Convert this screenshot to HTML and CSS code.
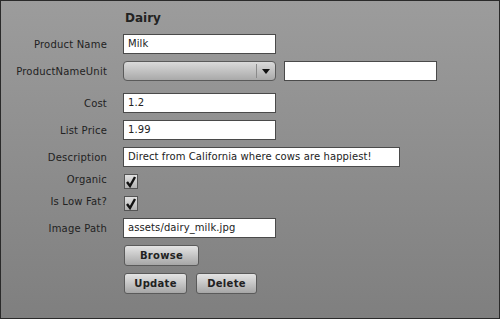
FILE: index.html
```html
<!DOCTYPE html>
<html lang="en">
<head>
    <meta charset="UTF-8">
    <title>Dairy</title>
    <link rel="stylesheet" href="styles.css">
</head>
<body>
    <div class="panel">
        <div class="form">
            <div class="label"></div>
            <h1 class="title">Dairy</h1>

            <label class="label">Product Name</label>
            <div class="field"><div class="text">Milk</div></div>

            <label class="label">ProductNameUnit</label>
            <div class="field">
                <div class="combo"><span class="combo-arrow"></span></div>
                <div class="text unit"></div>
            </div>

            <label class="label gap-top">Cost</label>
            <div class="field gap-top"><div class="text">1.2</div></div>

            <label class="label">List Price</label>
            <div class="field"><div class="text">1.99</div></div>

            <label class="label">Description</label>
            <div class="field"><div class="text wide">Direct from California where cows are happiest!</div></div>

            <label class="label small">Organic</label>
            <div class="field small">
                <span class="check"><svg width="12" height="13" viewBox="0 0 12 13"><path d="M2 7 L5 11 L10 2" fill="none" stroke="#111" stroke-width="2.4"/></svg></span>
            </div>

            <label class="label small">Is Low Fat?</label>
            <div class="field small">
                <span class="check"><svg width="12" height="13" viewBox="0 0 12 13"><path d="M2 7 L5 11 L10 2" fill="none" stroke="#111" stroke-width="2.4"/></svg></span>
            </div>

            <label class="label">Image Path</label>
            <div class="field"><div class="text">assets/dairy_milk.jpg</div></div>

            <div class="label"></div>
            <div class="field"><button class="btn browse">Browse</button></div>

            <div class="label"></div>
            <div class="field">
                <button class="btn update">Update</button>
                <button class="btn delete">Delete</button>
            </div>
        </div>
    </div>
</body>
</html>
```

FILE: styles.css
```css
body {
    margin: 0;
    font-family: 'DejaVu Sans', Verdana, sans-serif;
    font-size: 10px;
    color: #222;
}

.panel {
    width: 500px;
    height: 319px;
    box-sizing: border-box;
    border: 1px solid #2a2a2a;
    background: linear-gradient(#9c9c9c, #7f7f7f);
    padding-top: 8px;
}

.form {
    display: grid;
    grid-template-columns: 106px auto;
    column-gap: 16px;
    row-gap: 7px;
    align-items: center;
}

.title {
    margin: 0;
    padding-left: 2px;
    font-size: 12px;
    font-weight: bold;
    color: #222;
    height: 18px;
    line-height: 18px;
}

.label {
    text-align: right;
    color: #222;
    letter-spacing: 0.2px;
}

.field {
    display: flex;
    align-items: center;
    gap: 8px;
}

.gap-top {
    margin-top: 5px;
}

.text {
    box-sizing: border-box;
    width: 153px;
    height: 20px;
    padding: 0 4px;
    border: 1px solid #4a4a4a;
    background: #fff;
    line-height: 18px;
    letter-spacing: 0.1px;
    white-space: nowrap;
    color: #222;
}

.wide {
    width: 277px;
}

.combo {
    position: relative;
    box-sizing: border-box;
    width: 153px;
    height: 20px;
    border: 1px solid #5a5a5a;
    border-radius: 4px;
    background: linear-gradient(#dadada, #a9a9a9);
}

.combo-arrow {
    position: absolute;
    right: 0;
    top: 2px;
    bottom: 2px;
    width: 18px;
    border-left: 1px solid #8a8a8a;
}

.combo-arrow::after {
    content: "";
    position: absolute;
    left: 5px;
    top: 5px;
    border-left: 4px solid transparent;
    border-right: 4px solid transparent;
    border-top: 5px solid #111;
}

.small {
    height: 15px;
}

.check {
    box-sizing: border-box;
    display: flex;
    align-items: center;
    justify-content: center;
    width: 14px;
    height: 15px;
    margin-left: 1px;
    border: 1px solid #555;
    background: linear-gradient(#e2e2e2, #b2b2b2);
}

.btn {
    box-sizing: border-box;
    height: 21px;
    margin: 0 0 0 1px;
    padding: 0;
    border: 1px solid #5a5a5a;
    border-radius: 3px;
    background: linear-gradient(#e4e4e4, #a6a6a6);
    font-family: 'DejaVu Sans', Verdana, sans-serif;
    font-size: 10px;
    font-weight: bold;
    letter-spacing: 0.3px;
    color: #222;
}

.browse {
    width: 75px;
}

.update {
    width: 63px;
}

.delete {
    width: 61px;
}
```
